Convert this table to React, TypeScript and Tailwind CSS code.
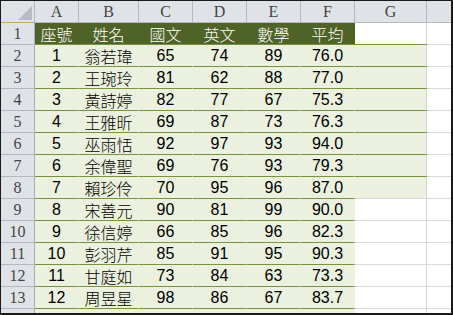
import React from "react";

const rows: (string | number)[][] = [
  ["座號", "姓名", "國文", "英文", "數學", "平均"],
  [1, "翁若瑋", 65, 74, 89, "76.0"],
  [2, "王琬玲", 81, 62, 88, "77.0"],
  [3, "黃詩婷", 82, 77, 67, "75.3"],
  [4, "王雅昕", 69, 87, 73, "76.3"],
  [5, "巫雨恬", 92, 97, 93, "94.0"],
  [6, "余偉聖", 69, 76, 93, "79.3"],
  [7, "賴珍伶", 70, 95, 96, "87.0"],
  [8, "宋善元", 90, 81, 99, "90.0"],
  [9, "徐信婷", 66, 85, 96, "82.3"],
  [10, "彭羽芹", 85, 91, 95, "90.3"],
  [11, "甘庭如", 73, 84, 63, "73.3"],
  [12, "周昱星", 98, 86, 67, "83.7"],
  [13, "葉佳蓉", 88, 79, 90, "85.7"],
];

const HDR =
  "h-[22px] bg-[#dfe3e8] border-r border-b border-r-[#b4b9bf] border-b-[#b4b9bf] flex items-center justify-center text-[16px] text-[#444444] [font-family:'Liberation_Serif',serif]";
const ROWHDR =
  "h-[22px] bg-[#dfe3e8] border-r border-b border-r-[#a9aeb4] border-b-[#b4b9bf] flex items-center justify-center text-[16px] text-[#444444] [font-family:'Liberation_Serif',serif]";
const TITLE =
  "h-[22px] bg-[#4f6228] border-r border-b border-r-[#4f6228] border-b-[#77933c] flex items-center justify-center text-[16px] font-light text-white [font-family:'Noto_Sans_CJK_TC',sans-serif]";
const DATA =
  "h-[22px] bg-[#ebf1de] border-r border-b border-r-[#ebf1de] border-b-[#77933c] flex items-center justify-center text-[16px] text-black [font-family:'Liberation_Sans','Noto_Sans_CJK_TC',sans-serif]";
const NAME =
  "h-[22px] bg-[#ebf1de] border-r border-b border-r-[#ebf1de] border-b-[#77933c] flex items-center justify-center text-[16px] font-light text-black [font-family:'Noto_Sans_CJK_TC',sans-serif]";
const G_WHITE_GREEN = "h-[22px] bg-white border-r border-b border-r-[#d9d9d9] border-b-[#77933c]";
const G_FILL_GREEN = "h-[22px] bg-[#ebf1de] border-r border-b border-r-[#d9d9d9] border-b-[#77933c]";
const G_FILL_GRAY = "h-[22px] bg-[#ebf1de] border-r border-b border-r-[#d9d9d9] border-b-[#d9d9d9]";
const G_WHITE = "h-[22px] bg-white border-r border-b border-r-[#d9d9d9] border-b-[#d9d9d9]";
const H_CELL = "h-[22px] bg-white border-b border-b-[#d9d9d9]";

export default function App() {
  return (
    <div className="w-[453px] h-[315px] border-t border-l border-r-2 border-b-2 border-[#1a1a1a] overflow-hidden bg-white">
      <div className="grid grid-cols-[34px_44px_60px_54px_54px_54px_54px_72px_1fr]">
        <div className="relative h-[22px] bg-[#dfe3e8] border-r border-b border-r-[#b4b9bf] border-b-[#c9a66b]">
          <svg className="absolute left-0 top-0" width="33" height="21" viewBox="0 0 33 21">
            <polygon points="31,5 31,19 17,19" fill="#b9bdc2" />
          </svg>
        </div>
        {["A", "B", "C", "D", "E", "F", "G"].map((c) => (
          <div key={c} className={HDR}>
            {c}
          </div>
        ))}
        <div className="h-[22px] bg-[#dfe3e8] border-b border-b-[#b4b9bf]" />

        {rows.map((r, i) => {
          const rn = i + 1;
          let gCls = G_WHITE;
          if (rn === 1) gCls = G_WHITE_GREEN;
          else if (rn <= 7) gCls = G_FILL_GREEN;
          else if (rn === 8) gCls = G_FILL_GRAY;
          return (
            <React.Fragment key={rn}>
              <div className={ROWHDR}>{rn}</div>
              {r.map((v, j) => (
                <div key={j} className={rn === 1 ? TITLE : j === 1 ? NAME : DATA}>
                  {v}
                </div>
              ))}
              <div className={gCls} />
              <div className={H_CELL} />
            </React.Fragment>
          );
        })}
      </div>
    </div>
  );
}
